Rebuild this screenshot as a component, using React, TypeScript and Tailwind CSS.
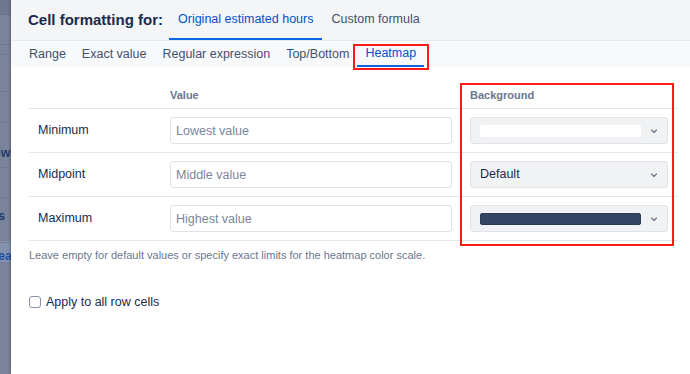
import React from 'react';

const font = { fontFamily: '"Liberation Sans", Arial, sans-serif' };

const Chevron: React.FC = () => (
  <svg width="10" height="10" viewBox="0 0 10 10" className="shrink-0">
    <path d="M2.5 4l2.5 2.5L7.5 4" fill="none" stroke="#6b778c" strokeWidth="1.2" strokeLinecap="round" strokeLinejoin="round" />
  </svg>
);

const rows = [
  { label: 'Minimum', placeholder: 'Lowest value', bg: 'white' },
  { label: 'Midpoint', placeholder: 'Middle value', bg: 'default' },
  { label: 'Maximum', placeholder: 'Highest value', bg: 'dark' },
];

const subTabs = ['Range', 'Exact value', 'Regular expression', 'Top/Bottom', 'Heatmap'];

export default function App() {
  return (
    <div className="flex w-[690px] h-[374px] overflow-hidden bg-white" style={font}>
      {/* Backdrop strip behind the dialog */}
      <div className="w-[11px] shrink-0 flex flex-col bg-[#7a8399] text-[12.5px] font-semibold overflow-hidden">
        <div className="h-[15px] bg-[#6f788e] border-b border-[#68718a]" />
        <div className="h-[30px] border-b border-[#717a91]" />
        <div className="h-[10px] border-b border-[#717a91]" />
        <div className="h-[37px] border-b border-[#717a91]" />
        <div className="h-[31px] border-b border-[#717a91]" />
        <div className="h-[45px] border-b border-[#717a91] flex items-center pt-[16px] text-[#243b6b] whitespace-nowrap">
          <span className="-ml-[7px]">ow</span>
        </div>
        <div className="h-[30px] border-b border-[#717a91]" />
        <div className="h-[44px] border-b border-dashed border-[#8a93a8] flex items-center pb-[6px] text-[#243b6b]">
          <span className="-ml-[2px]">s</span>
        </div>
        <div className="h-[21px] bg-[#8290ad] border-y border-[#74809c] flex items-center pt-[8px] text-[#1f4fa8] whitespace-nowrap">
          <span className="-ml-[2px]">ea</span>
        </div>
        <div className="flex-1" />
      </div>

      {/* Dialog */}
      <div className="flex-1 flex flex-col min-w-0 shadow-[-1px_0_2px_rgba(0,0,0,0.25)]">
        {/* Header */}
        <div className="h-[41px] bg-[#f4f5f7] border-b border-[#e4e6ea] flex items-end pl-[17px]">
          <h1 className="text-[15px] font-semibold text-[#172b4d] self-center pt-[1px] mr-[6px]">Cell formatting for:</h1>
          <div className="flex items-end h-full">
            <div className="h-full flex items-center px-[9px] text-[12.5px] text-[#0052cc] border-b-2 border-[#0c66e4]">
              Original estimated hours
            </div>
            <div className="h-full flex items-center px-[9px] text-[12.5px] text-[#42526e] pb-[2px]">
              Custom formula
            </div>
          </div>
        </div>

        {/* Sub tabs */}
        <div className="h-[26px] bg-[#f8f9fa] flex pl-[10px]">
          {subTabs.map((t) => {
            const active = t === 'Heatmap';
            return (
              <div
                key={t}
                className={
                  'relative h-full flex items-center px-[8px] text-[12.5px] ' +
                  (active ? 'text-[#0052cc] border-b-2 border-[#0c66e4]' : 'text-[#42526e]')
                }
              >
                {t}
                {active && (
                  <div className="absolute left-[-4px] right-[-5px] top-[3px] bottom-[-5px] border-2 border-[#ff1a1a] pointer-events-none" />
                )}
              </div>
            );
          })}
        </div>

        {/* Content */}
        <div className="pl-[18px] pr-[2px] pt-[16px]">
          <div className="relative w-[648px]">
            {/* red highlight around background column */}
            <div className="absolute left-[431px] top-0 w-[214px] h-[163px] border-2 border-[#ff1a1a] pointer-events-none z-10" />

            <div className="flex h-[26px] border-b border-[#e4e6ea] text-[11px] font-semibold text-[#6b778c]">
              <div className="w-[132px]" />
              <div className="w-[300px] px-[9px] flex items-center">Value</div>
              <div className="w-[216px] px-[9px] flex items-center">Background</div>
            </div>

            {rows.map((r) => (
              <div key={r.label} className="flex h-[44px] border-b border-[#e4e6ea] items-center">
                <div className="w-[132px] px-[9px] text-[12.5px] text-[#172b4d]">{r.label}</div>
                <div className="w-[300px] px-[9px]">
                  <input
                    placeholder={r.placeholder}
                    className="w-full h-[27px] rounded-[3px] border border-[#e1e3e8] px-[5px] text-[12.5px] text-[#172b4d] placeholder:text-[#7a869a] outline-none"
                    style={font}
                  />
                </div>
                <div className="w-[216px] px-[9px]">
                  <div className="h-[27px] rounded-[3px] border border-[#e1e3e8] bg-[#f1f2f4] flex items-center pl-[9px] pr-[8px] gap-[8px]">
                    {r.bg === 'default' ? (
                      <span className="flex-1 text-[12.5px] text-[#172b4d]">Default</span>
                    ) : (
                      <span
                        className={
                          'flex-1 h-[12px] rounded-[2px] ' +
                          (r.bg === 'dark' ? 'bg-[#344563] border border-[#2c3a55]' : 'bg-white')
                        }
                      />
                    )}
                    <Chevron />
                  </div>
                </div>
              </div>
            ))}
          </div>

          <p className="mt-[6px] text-[11px] text-[#6b778c]">
            Leave empty for default values or specify exact limits for the heatmap color scale.
          </p>

          <label className="mt-[29px] flex items-center gap-[5px] text-[12.5px] text-[#172b4d]">
            <span className="w-[12px] h-[12px] rounded-[3px] border border-[#8993a4] bg-white" />
            Apply to all row cells
          </label>
        </div>
      </div>
    </div>
  );
}
